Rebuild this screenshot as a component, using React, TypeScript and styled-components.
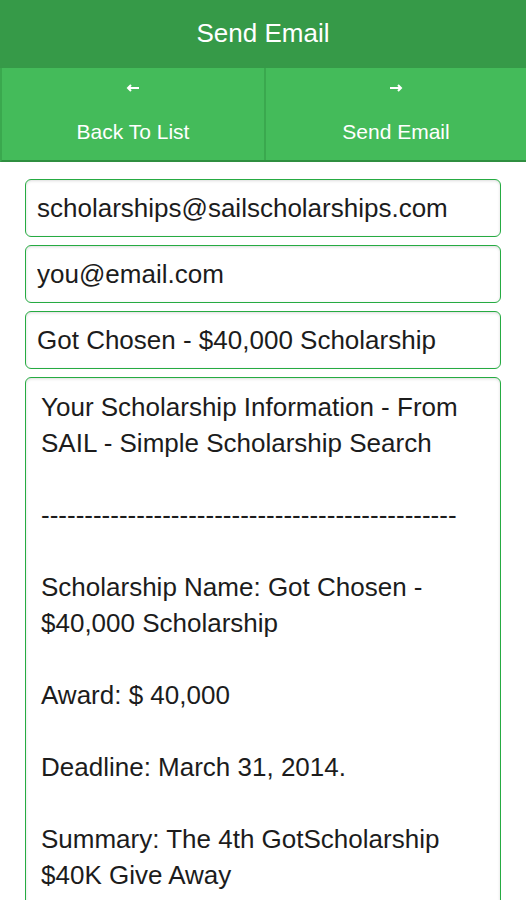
import React from 'react';
import styled, { createGlobalStyle } from 'styled-components';

const body = `Your Scholarship Information - From SAIL - Simple Scholarship Search

------------------------------------------------

Scholarship Name: Got Chosen - $40,000 Scholarship

Award: $ 40,000

Deadline: March 31, 2014.

Summary: The 4th GotScholarship $40K Give Away`;

const ArrowIcon: React.FC<{ dir: 'left' | 'right' }> = ({ dir }) => (
      <svg width='14' height='8' viewBox='0 0 14 8'>
            {dir === 'left' ? (
                  <path d='M13 4H2M5 1L2 4l3 3' stroke='#fff' strokeWidth='2' fill='none' />
            ) : (
                  <path d='M1 4h11M9 1l3 3-3 3' stroke='#fff' strokeWidth='2' fill='none' />
            )}
      </svg>
);

const App: React.FC = () => {
      return (
            <>
                  <GlobalStyle />
                  <Page>
                        <Header>Send Email</Header>
                        <TabBar>
                              <Tab>
                                    <ArrowIcon dir='left' />
                                    <TabLabel>Back To List</TabLabel>
                              </Tab>
                              <Tab $divider>
                                    <ArrowIcon dir='right' />
                                    <TabLabel>Send Email</TabLabel>
                              </Tab>
                        </TabBar>
                        <Form>
                              <Field defaultValue='scholarships@sailscholarships.com' />
                              <Field defaultValue='you@email.com' />
                              <Field defaultValue='Got Chosen - $40,000 Scholarship' />
                              <Body defaultValue={body} />
                        </Form>
                  </Page>
            </>
      );
};

export default App;

const GlobalStyle = createGlobalStyle`
      html, body {
            margin: 0;
            padding: 0;
            background: #fff;
            overflow: hidden;
      }
      body {
            font-family: 'Liberation Sans', Arial, sans-serif;
      }
`;

const Page = styled.div`
      width: 526px;
      height: 900px;
      overflow: hidden;
      display: flex;
      flex-direction: column;
`;

const Header = styled.div`
      flex-shrink: 0;
      height: 68px;
      background: #369a48;
      color: #fff;
      font-size: 26px;
      display: flex;
      align-items: center;
      justify-content: center;
      padding-bottom: 1px;
      box-sizing: border-box;
`;

const TabBar = styled.div`
      flex-shrink: 0;
      display: grid;
      grid-template-columns: 1fr 1fr;
      height: 94px;
      background: #44bb5a;
      border-left: 2px solid #3aa84e;
      border-bottom: 2px solid #2f8f40;
      box-sizing: border-box;
`;

const Tab = styled.div<{ $divider?: boolean }>`
      display: flex;
      flex-direction: column;
      align-items: center;
      padding-top: 16px;
      color: #fff;
      border-left: ${(p) => (p.$divider ? '2px solid #3aa84e' : 'none')};
`;

const TabLabel = styled.span`
      font-size: 21px;
      margin-top: 28px;
`;

const Form = styled.div`
      display: flex;
      flex-direction: column;
      gap: 8px;
      padding: 17px 25px 0;
`;

const boxStyle = `
      box-sizing: border-box;
      flex-shrink: 0;
      width: 100%;
      border: 1.5px solid #26ab42;
      border-radius: 6px;
      box-shadow: inset 0 1px 3px rgba(0, 0, 0, 0.14);
      font-family: 'Liberation Sans', Arial, sans-serif;
      font-size: 26px;
      color: #1c1c1c;
      background: #fff;
      outline: none;
      margin: 0;
`;

const Field = styled.input`
      ${boxStyle}
      height: 58px;
      padding: 0 11px;
`;

const Body = styled.textarea`
      ${boxStyle}
      height: 600px;
      padding: 11px 15px 10px;
      line-height: 36px;
      resize: none;
      overflow: hidden;
`;
